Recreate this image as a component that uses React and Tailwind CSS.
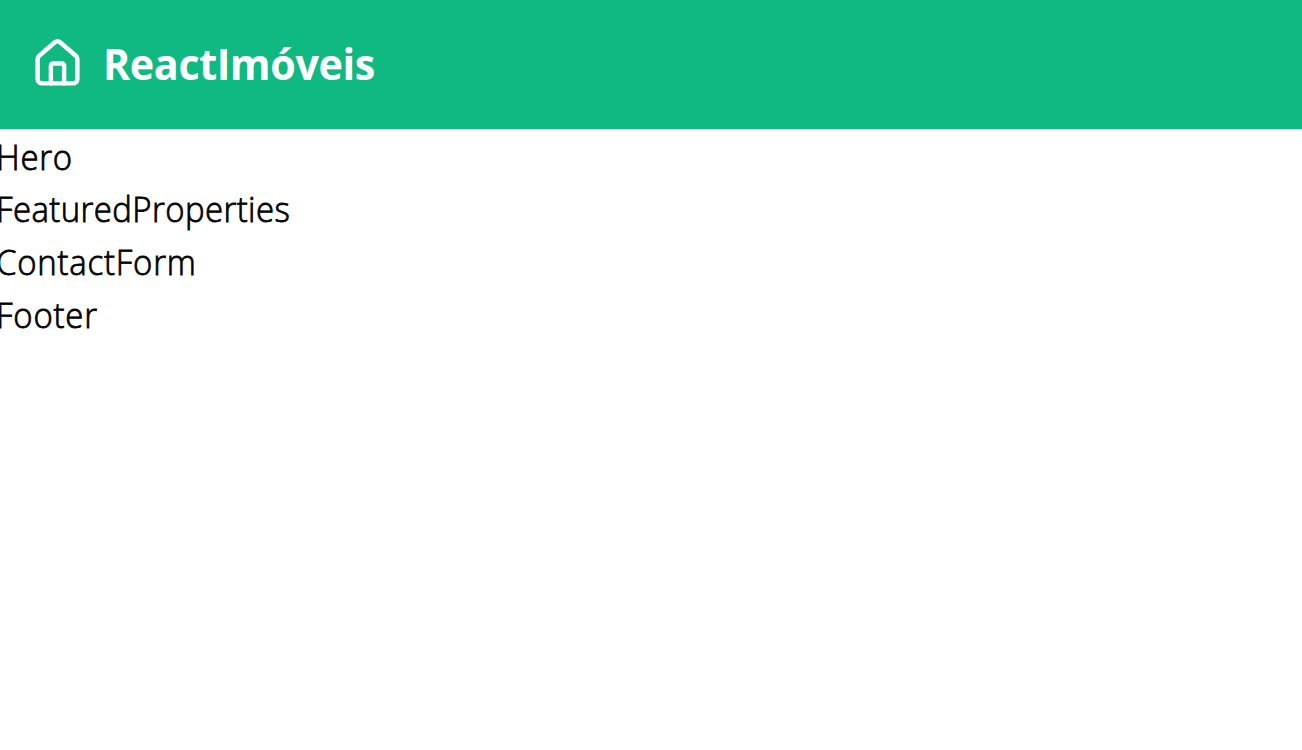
import { House } from "lucide-react";

function Header() {
  return (
    <header className="flex h-[129px] items-center bg-[#10b981] pl-[31px] text-white">
      <House className="-mt-[2px] size-[53px] shrink-0" strokeWidth={2} />
      <h1 className="-mt-[1px] ml-[18.5px] origin-left scale-x-[0.96] text-[43px] leading-[60px] font-bold tracking-[-0.4px]">
        ReactImóveis
      </h1>
    </header>
  );
}

function Section({ name, className }) {
  return <section className={`-ml-[4px] origin-left scale-x-[0.94] ${className}`}>{name}</section>;
}

export default function App() {
  return (
    <div className="min-h-screen overflow-hidden bg-white font-['Open_Sans','Noto_Sans',sans-serif] text-black">
      <Header />
      <main className="pt-[1.5px] text-[35px] leading-[52.7px] font-light [-webkit-text-stroke:0.8px_black]">
        <Section name="Hero" className="tracking-[0.8px]" />
        <Section name="FeaturedProperties" className="tracking-[0.45px]" />
        <Section name="ContactForm" className="tracking-[0.85px]" />
        <Section name="Footer" className="tracking-[0.85px]" />
      </main>
    </div>
  );
}
